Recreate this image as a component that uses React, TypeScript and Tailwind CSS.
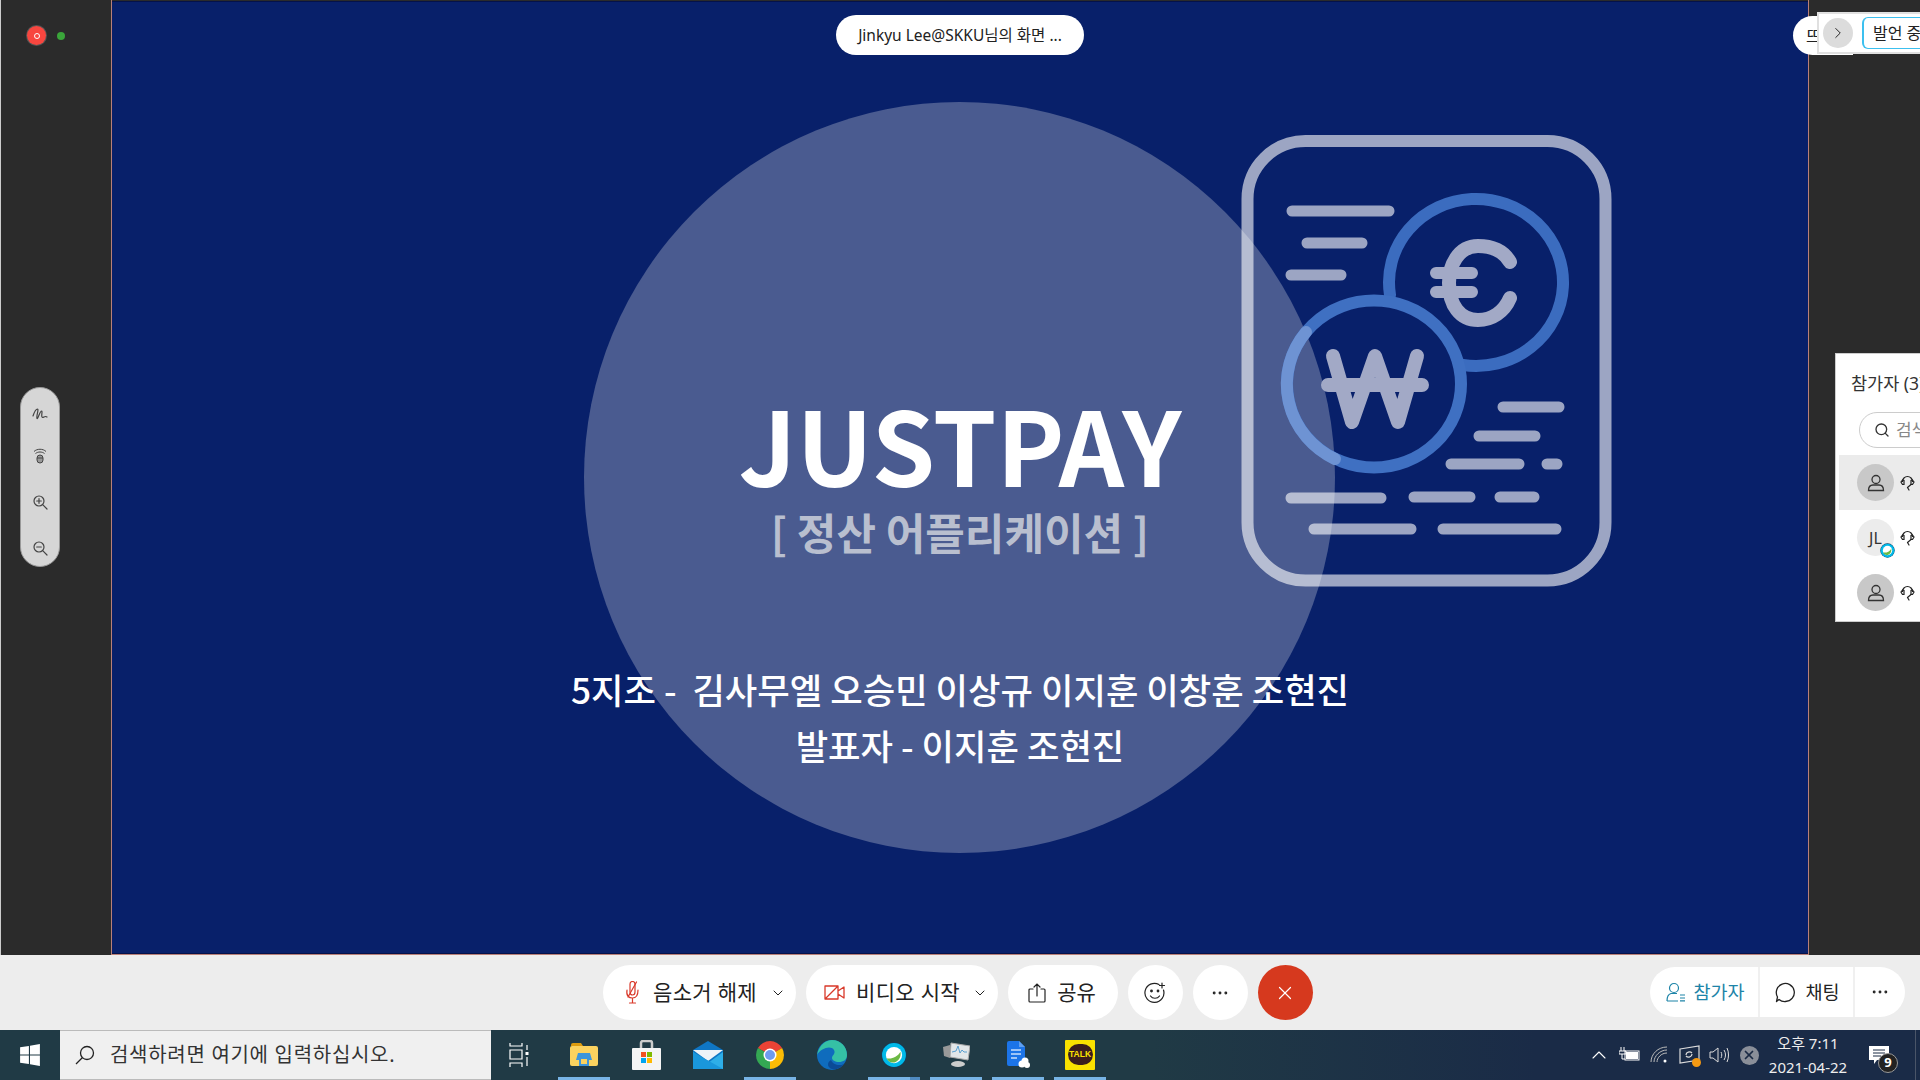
import { Search, ChevronRight, ChevronDown, ChevronUp, X, Ellipsis } from "lucide-react"

const FONT = { fontFamily: '"Noto Sans", "Noto Sans CJK KR", sans-serif' }
const CJK = { fontFamily: '"Noto Sans CJK KR", sans-serif' }

function Dot() {
  return (
    <div className="flex items-center gap-[11px] pl-[26px] pt-[26px]">
      <div className="flex h-[19px] w-[19px] items-center justify-center rounded-full bg-[#f8463f] ring-1 ring-[#555]">
        <div className="h-[6px] w-[6px] rounded-full border-[1.5px] border-white" />
      </div>
      <div className="h-[8px] w-[8px] rounded-full bg-[#3aa53a]" />
    </div>
  )
}

function ScribbleIcon() {
  return (
    <svg width="16" height="14" viewBox="0 0 16 14" fill="none" stroke="#444" strokeWidth="1.2" strokeLinecap="round">
      <path d="M1 9C2 6 4 2 5.500 2 7 2 4 10 5 11.500 6 12 8 4 9.500 4 11 4 8.500 10 10.500 10.500 12 10.500 13 8.500 15 10" />
    </svg>
  )
}

function RemoteIcon() {
  return (
    <svg width="14" height="16" viewBox="0 0 14 16" fill="none" stroke="#444" strokeWidth="1">
      <path d="M1 3.500c3-3 9-3 12 0M2.500 5.500c2.500-2 6.500-2 9 0" />
      <rect x="4" y="7" width="6" height="8" rx="3" fill="#999" />
      <path d="M4 10h6" />
    </svg>
  )
}

function ZoomIcon({ plus }: { plus?: boolean }) {
  return (
    <svg width="15" height="15" viewBox="0 0 15 15" fill="none" stroke="#444" strokeWidth="1.2" strokeLinecap="round">
      <circle cx="6" cy="6" r="5" />
      <path d="M9.700 9.700L14 14M3.700 6h4.600" />
      {plus && <path d="M6 3.700v4.600" />}
    </svg>
  )
}

function LeftRail() {
  return (
    <div className="flex w-[112px] shrink-0 flex-col border-x border-l-[#ccc] border-r-[#b98078] bg-[#2b2b2b]">
      <Dot />
      <div className="ml-[19px] mt-[342px] flex h-[180px] w-[40px] flex-col items-center gap-[27px] rounded-full border border-[#999] bg-[#d6d6d6] pt-[19px]">
        <ScribbleIcon />
        <div className="mb-[4px]">
          <RemoteIcon />
        </div>
        <ZoomIcon plus />
        <div className="mt-[4px]">
          <ZoomIcon />
        </div>
      </div>
    </div>
  )
}

function Slide() {
  return (
    <div className="relative flex h-[953px] w-[1696px] shrink-0 flex-col items-center overflow-hidden border-y border-[#04124a] bg-[#08206a] pt-[391px]">
      <div className="absolute left-[472px] top-[100px] h-[751px] w-[751px] rounded-full bg-[#4a5b90]" />
      <svg className="absolute left-[1108px] top-[118px]" width="410" height="480" viewBox="0 0 410 480" fill="none" strokeLinecap="round">
        <g stroke="#fff" strokeOpacity="0.6">
          <rect x="27.500" y="21" width="358" height="439.500" rx="58" strokeWidth="12" />
          <g strokeWidth="11">
            <path d="M72 91h97M87 123h55M71 155h50" />
            <path d="M283 287h56M259 316h56M231 344h68M327 344h10" />
            <path d="M71 378h90M194 377h56M280 377h34M94 409h97M223 409h113" />
          </g>
        </g>
        <g strokeWidth="12">
          <path d="M170 175A87 83.500 0 1 1 243 245" stroke="#3b6cbf" />
          <ellipse cx="154" cy="264" rx="87" ry="83.500" stroke="#3f70c2" />
          <path d="M86 212A87 83.500 0 0 0 115 339" stroke="#6e93d3" />
        </g>
        <g stroke="#a2a9c6" strokeWidth="14" strokeLinejoin="round">
          <path d="M290 142C282 128 268 126 258 126 238 126 229 146 229 163 229 185 240 200 258 200 272 200 284 192 290 178" />
          <path d="M216 153h36M216 172h36" strokeWidth="12" />
          <path d="M113 236l19 66 23-66 23 66 19-66M108 265h94" />
        </g>
      </svg>
      <div className="relative flex flex-col items-center text-white" style={CJK}>
        <div className="h-[100px] text-[102px] leading-[100px] font-semibold">JUSTPAY</div>
        <div className="mt-[10px] h-[56px] text-[43px] leading-[56px] font-semibold text-[#b9bfcf]">[ 정산 어플리케이션 ]</div>
        <div className="mt-[102px] text-[35.300px] leading-[56px] font-medium whitespace-pre">5지조 -  김사무엘 오승민 이상규 이지훈 이창훈 조현진</div>
        <div className="text-[35.300px] leading-[56px] font-medium">발표자 - 이지훈 조현진</div>
      </div>
    </div>
  )
}

function PersonIcon() {
  return (
    <svg width="20" height="20" viewBox="0 0 20 20" fill="none" stroke="#333" strokeWidth="1.300">
      <circle cx="10" cy="6.500" r="4" />
      <path d="M2.500 17.500c0-3.500 2-5.500 4.500-5.500h6c2.500 0 4.500 2 4.500 5.500z" />
    </svg>
  )
}

function HeadsetIcon() {
  return (
    <svg width="15" height="16" viewBox="0 0 15 16" fill="none" stroke="#222" strokeWidth="1.200" strokeLinecap="round">
      <path d="M2.500 6.500a5 5 0 0 1 10 0" />
      <path d="M2.500 5L1 7l1.500 2.500h1.500V5.500zM12.500 5L14 7l-1.500 2.500H11V5.500z" />
      <path d="M7.500 12.500l1.500 2.500M11 9.500l-3.500 3" />
    </svg>
  )
}

function CiscoBadge({ size }: { size: number }) {
  return (
    <svg width={size} height={size} viewBox="0 0 24 24">
      <circle cx="12" cy="12" r="11.500" fill="#0d3f66" />
      <circle cx="12" cy="12" r="11" fill="#00b9e8" />
      <path d="M17 2.500A11 11 0 0 1 13 23 11 11 0 0 0 17 2.500z" fill="#0b3a5e" />
      <circle cx="12" cy="12" r="7.500" fill="#fff" />
      <path d="M5 15c5 1 10-1 13-6 1 6-3 10-7 10-3 0-5-2-6-4z" fill="#6cb944" />
    </svg>
  )
}

function RightRail() {
  return <div className="flex-1 bg-[#2b2b2b]" />
}

function ParticipantRow({ active, jl }: { active?: boolean; jl?: boolean }) {
  return (
    <div className={`flex h-[55px] shrink-0 items-center gap-[6px] pl-[18px] ${active ? "bg-[#ebebeb]" : ""}`}>
      <div className={`relative flex h-[37px] w-[37px] shrink-0 items-center justify-center rounded-full ${jl ? "bg-[#ececec]" : "bg-[#c8c8c8]"}`}>
        {jl ? <span className="text-[16px] text-[#333]">JL</span> : <PersonIcon />}
        {jl && (
          <div className="absolute -bottom-[2px] -right-[1px]">
            <CiscoBadge size={15} />
          </div>
        )}
      </div>
      <HeadsetIcon />
    </div>
  )
}

function ParticipantsPanel() {
  return (
    <div className="absolute left-[1835px] top-[353px] flex h-[269px] w-[85px] flex-col overflow-hidden border-y border-l border-[#ccc] bg-white pl-[3px]" style={FONT}>
      <div className="h-[58px] shrink-0 whitespace-nowrap pl-[12px] pt-[17px] text-[17.500px] leading-[24px] text-[#333]">참가자 (3)</div>
      <div className="ml-[20px] flex h-[36px] w-[100px] shrink-0 items-center gap-[6px] rounded-full border border-[#ccc] pl-[14px] text-[17px] text-[#888]">
        <Search size={16} color="#333" className="shrink-0" />
        <span className="whitespace-nowrap">검색</span>
      </div>
      <div className="mt-[7px]">
        <ParticipantRow active />
        <ParticipantRow jl />
        <ParticipantRow />
      </div>
    </div>
  )
}

function Toolbar() {
  return (
    <div className="relative flex h-[75px] shrink-0 items-center justify-center gap-[10px] bg-[#ededed] pr-[5px] text-[21px] text-[#222]" style={FONT}>
      <div className="flex h-[55px] w-[193px] items-center justify-between rounded-full bg-white pl-[20px] pr-[10px]">
        <svg width="18" height="24" viewBox="0 0 18 24" fill="none" stroke="#d9392a" strokeWidth="1.200" strokeLinecap="round">
          <path d="M7 3a2.500 2.500 0 0 1 5 0v8c0 2-1 3-2.500 3S7 13 7 11z" />
          <path d="M4 9c-1 6 2 8 5.500 8S15 15 15 9M9.500 17v5M6.500 22h6M13.500 1L5 16" />
        </svg>
        <span className="tracking-[0.3px]">음소거 해제</span>
        <ChevronDown size={16} strokeWidth={1.500} />
      </div>
      <div className="flex h-[55px] w-[192px] items-center justify-between rounded-full bg-white pl-[18px] pr-[10px]">
        <svg width="21" height="17" viewBox="0 0 21 17" fill="none" stroke="#d9392a" strokeWidth="1.300" strokeLinejoin="round">
          <path d="M1 2h13v13H1zM14 7l6-4v11l-6-4M1 15L14 2" />
        </svg>
        <span className="tracking-[0.3px]">비디오 시작</span>
        <ChevronDown size={16} strokeWidth={1.500} />
      </div>
      <div className="flex h-[55px] w-[110px] items-center justify-center gap-[10px] rounded-full bg-white pr-[2px]">
        <svg width="20" height="20" viewBox="0 0 20 20" fill="none" stroke="#222" strokeWidth="1.200" strokeLinecap="round">
          <path d="M6 6H3a1 1 0 0 0-1 1v11a1 1 0 0 0 1 1h14a1 1 0 0 0 1-1V7a1 1 0 0 0-1-1h-3M10 13V1M7 4l3-3 3 3" />
        </svg>
        <span>공유</span>
      </div>
      <div className="flex h-[55px] w-[55px] items-center justify-center rounded-full bg-white">
        <svg width="22" height="22" viewBox="0 0 22 22" fill="none" stroke="#222" strokeWidth="1.200" strokeLinecap="round">
          <path d="M15 2.500A9.500 9.500 0 1 0 19.500 8M6.500 14c2 3 7 3 9 0M18 1v5M15.500 3.500h5" />
          <circle cx="7.500" cy="9" r="0.800" fill="#222" />
          <circle cx="14" cy="9" r="0.800" fill="#222" />
        </svg>
      </div>
      <div className="flex h-[55px] w-[55px] items-center justify-center rounded-full bg-white">
        <Ellipsis size={20} strokeWidth={1.500} />
      </div>
      <div className="flex h-[55px] w-[55px] items-center justify-center rounded-full bg-[#d6391e]">
        <X size={22} color="white" strokeWidth={1.300} />
      </div>
      <div className="absolute left-[1650px] top-[12px] flex h-[50px] items-stretch rounded-full bg-white text-[18.500px]">
        <div className="flex w-[110px] items-center justify-center gap-[7px] border-r-2 border-[#f0f0f0] pl-[3px] text-[#1d84a8]">
          <svg width="20" height="20" viewBox="0 0 20 20" fill="none" stroke="#1d84a8" strokeWidth="1.200">
            <circle cx="8" cy="6" r="4.500" />
            <path d="M1 19c0-5 2-7 4-7.500h6M1 19h11M14 13h5M14 16h5M14 18.800h5" />
          </svg>
          참가자
        </div>
        <div className="flex w-[95px] items-center justify-center gap-[9px] border-r-2 border-[#f0f0f0] pl-[2px]">
          <svg width="21" height="21" viewBox="0 0 21 21" fill="none" stroke="#222" strokeWidth="1.300" strokeLinejoin="round">
            <path d="M4 17.500l-2.500 2 1-4.500A9 9 0 1 1 10.500 19.500 9 9 0 0 1 4 17.500z" />
          </svg>
          채팅
        </div>
        <div className="flex w-[50px] items-center justify-center">
          <Ellipsis size={20} strokeWidth={1.500} />
        </div>
      </div>
    </div>
  )
}

function WindowsLogo() {
  return (
    <svg width="20" height="22" viewBox="0 0 18 20" fill="#fff">
      <path d="M0 3l8-1.200v7.700H0zM9 1.700L18 0v9.500H9zM0 10.500h8v7.700L0 17zM9 10.500h9V20l-9-1.700z" />
    </svg>
  )
}

function TaskIcon({ running, children, split }: { running?: boolean; split?: boolean; children: React.ReactNode }) {
  return (
    <div className="relative flex h-full w-[62px] shrink-0 items-center justify-center pb-[1px]">
      {children}
      {running && <div className={`absolute bottom-0 left-[5px] h-[3px] w-[52px] bg-[#78b4e6] ${split ? "border-r-[10px] border-[#4f8ac0]" : ""}`} />}
    </div>
  )
}

function TaskbarApps() {
  return (
    <div className="flex h-full items-center">
      <div className="flex h-full w-[62px] items-center justify-center pr-[6px]">
        <svg width="20" height="24" viewBox="0 0 20 24" fill="none" stroke="#fff" strokeWidth="1.200">
          <path d="M1 0v3h12V0M1 7h12v9H1zM1 24v-4h12v4" />
          <path d="M18 2v5M18 14v9" />
          <rect x="16.500" y="9" width="3" height="3" fill="#fff" stroke="none" />
        </svg>
      </div>
      <TaskIcon running>
        <svg width="28" height="23" viewBox="0 0 28 23">
          <path d="M1 2a2 2 0 0 1 2-2h8l2 3h-12z" fill="#dc9b0f" />
          <rect x="0" y="3" width="28" height="20" rx="2" fill="#fbd25f" />
          <path d="M8 10h12l2 7h-3v6H9v-6H6z" fill="#3c95dc" />
          <rect x="11" y="16" width="6" height="5" fill="#fbd25f" />
        </svg>
      </TaskIcon>
      <TaskIcon>
        <svg width="29" height="30" viewBox="0 0 29 30">
          <path d="M9 8V3a2 2 0 0 1 2-2h7a2 2 0 0 1 2 2v5" fill="none" stroke="#ccc" strokeWidth="2.500" />
          <rect x="0" y="8" width="29" height="22" rx="1" fill="#f4f4f4" />
          <rect x="9" y="12" width="5" height="5" fill="#f25022" />
          <rect x="15" y="12" width="5" height="5" fill="#7fba00" />
          <rect x="9" y="18" width="5" height="5" fill="#00a4ef" />
          <rect x="15" y="18" width="5" height="5" fill="#ffb900" />
        </svg>
      </TaskIcon>
      <TaskIcon>
        <svg width="30" height="28" viewBox="0 0 30 28">
          <path d="M0 9L15 0l15 9v19H0z" fill="#0f76c4" />
          <path d="M0 9h30L15 20z" fill="#eef3f8" />
          <path d="M0 11l15 11 15-11v17H0z" fill="#2eaee8" />
          <path d="M0 11l30 17H0z" fill="#1a97dc" />
        </svg>
      </TaskIcon>
      <TaskIcon running>
        <svg width="28" height="28" viewBox="0 0 28 28">
          <path d="M14 14L1.900 7A14 14 0 0 1 26.100 7z" fill="#ea4335" />
          <path d="M14 14L26.100 7A14 14 0 0 1 14 28z" fill="#fbbc05" />
          <path d="M14 14L14 28A14 14 0 0 1 1.900 7z" fill="#34a853" />
          <circle cx="14" cy="14" r="6.500" fill="#fff" />
          <circle cx="14" cy="14" r="5" fill="#6f9bf0" />
        </svg>
      </TaskIcon>
      <TaskIcon>
        <svg width="30" height="30" viewBox="0 0 30 30">
          <circle cx="15" cy="15" r="15" fill="#0f6cbd" />
          <path d="M0 15C2 5 9 0 15 0c9 0 15 7 15 15 0 5-4 7-8 7-4 0-7-2-7-4 0-3 4-4 2-8C14 5 4 8 0 15z" fill="#35c1a5" />
          <path d="M14 20c1 3 5 5 8 5 2 0 3 0 5-1-3 4-8 6-12 5-4-1-6-6-1-9z" fill="#0b4b96" />
        </svg>
      </TaskIcon>
      <TaskIcon running split>
        <CiscoBadge size={26} />
      </TaskIcon>
      <TaskIcon running>
        <svg width="27" height="25" viewBox="0 0 27 25">
          <path d="M8 1l19 3-2 14-18-3z" fill="#e2e6e8" stroke="#aaa" />
          <path d="M9 10l4-1 2-5 2 7 2-3 2 2 3 0" fill="none" stroke="#5aa0d0" strokeWidth="1" />
          <path d="M0 5l7-2v13l-6-2z" fill="#999" />
          <ellipse cx="15" cy="22" rx="7" ry="3" fill="#ccc" />
        </svg>
      </TaskIcon>
      <TaskIcon running>
        <svg width="23" height="27" viewBox="0 0 23 27">
          <path d="M2 0h10l6 6v19H2a2 2 0 0 1-2-2V2a2 2 0 0 1 2-2z" fill="#1c74e8" />
          <path d="M12 0l6 6h-6z" fill="#5f9ff0" />
          <path d="M4 9h10M4 13h10M4 17h6" stroke="#c9defa" strokeWidth="1.500" />
          <circle cx="15" cy="23" r="3.500" fill="#fff" />
          <circle cx="20" cy="24" r="3" fill="#fff" />
          <circle cx="18" cy="20" r="3.500" fill="#fff" />
        </svg>
      </TaskIcon>
      <TaskIcon running>
        <div className="flex h-[30px] w-[30px] items-center justify-center rounded-[1px] bg-[#fae100]">
          <div className="flex h-[21px] w-[25px] items-center justify-center rounded-full bg-[#3a1d1d] text-[8.500px] font-bold text-[#fae100]" style={{ fontFamily: '"Liberation Sans", sans-serif' }}>
            TALK
          </div>
        </div>
      </TaskIcon>
    </div>
  )
}

function TrayCell({ children }: { children: React.ReactNode }) {
  return <div className="flex h-full w-[30px] items-center justify-center">{children}</div>
}

function SystemTray() {
  return (
    <div className="ml-auto flex h-full items-center text-white">
      <TrayCell>
        <ChevronUp size={24} strokeWidth={1.100} />
      </TrayCell>
      <TrayCell>
        <svg width="21" height="16" viewBox="0 0 21 16" fill="#fff">
          <path d="M2 0v4M5 0v4M0 4h7v3H0zM3 7v5h3" stroke="#fff" fill="none" />
          <rect x="6" y="4" width="14" height="9" fill="none" stroke="#fff" />
          <rect x="7" y="5" width="12" height="7" fill="#fff" />
        </svg>
      </TrayCell>
      <TrayCell>
        <svg width="18" height="18" viewBox="0 0 18 18" fill="none" stroke="#bbb" strokeWidth="1">
          <path d="M1 16C1 8 8 1 17 1M4 16c0-6 6-12 13-12M7 16c0-4 4-9 10-9" />
          <circle cx="15" cy="15" r="1.500" fill="#fff" stroke="none" />
        </svg>
      </TrayCell>
      <TrayCell>
        <div className="relative">
          <svg width="21" height="20" viewBox="0 0 21 20" fill="none" stroke="#ddd" strokeWidth="1.200">
            <path d="M1 4l19-3v14l-19 3z" />
            <path d="M7 10c0-3 4-4 6-2M13 9c0 3-4 4-6 2" />
          </svg>
          <div className="absolute -bottom-[2px] -right-[1px] h-[9px] w-[9px] rounded-full bg-[#f59a13]" />
        </div>
      </TrayCell>
      <TrayCell>
        <svg width="20" height="16" viewBox="0 0 20 16" fill="none" stroke="#ddd" strokeWidth="1">
          <path d="M1 5h3l5-4v14l-5-4H1zM12 5c1 2 1 4 0 6M15 3c2 3 2 7 0 10M18 1c2 4 2 10 0 14" />
        </svg>
      </TrayCell>
      <TrayCell>
        <div className="flex h-[19px] w-[19px] items-center justify-center rounded-full bg-[#8a8f99]">
          <X size={14} color="#1a2a44" strokeWidth={3} />
        </div>
      </TrayCell>
      <div className="flex w-[88px] flex-col items-center text-[15px] leading-[24px] text-[#eee]">
        <span>오후 7:11</span>
        <span className="whitespace-nowrap">2021-04-22</span>
      </div>
      <div className="flex h-full w-[54px] items-center justify-center">
        <div className="relative">
          <svg width="20" height="18" viewBox="0 0 20 18" fill="#fff">
            <path d="M0 0h20v14H8l-3 4v-4H0z" />
            <path d="M4 4h12M4 7h12M4 10h8" stroke="#1a2a44" />
          </svg>
          <div className="absolute -bottom-[9px] -right-[9px] flex h-[20px] w-[20px] items-center justify-center rounded-full border border-[#999] bg-[#222] text-[13px] font-bold text-white">9</div>
        </div>
      </div>
      <div className="h-full w-[14px] pl-[9px]">
        <div className="h-full w-px bg-[#4a5568]" />
      </div>
    </div>
  )
}

function Taskbar() {
  return (
    <div className="flex h-[50px] shrink-0 items-stretch bg-[linear-gradient(90deg,#203a45_0%,#203a45_60%,#1a2b47_80%,#1a2b47_100%)]" style={FONT}>
      <div className="flex w-[60px] items-center justify-center">
        <WindowsLogo />
      </div>
      <div className="flex w-[431px] items-center gap-[15px] border-y border-[#bbb] bg-[#f0f0f0] pl-[15px] text-[20px] text-[#333]">
        <svg width="20" height="20" viewBox="0 0 20 20" fill="none" stroke="#222" strokeWidth="1.300">
          <circle cx="12" cy="8" r="6.500" />
          <path d="M7.500 12.500L1 19" />
        </svg>
        <span className="whitespace-nowrap tracking-[0.7px]">검색하려면 여기에 입력하십시오.</span>
      </div>
      <TaskbarApps />
      <SystemTray />
    </div>
  )
}

export default function App() {
  return (
    <div className="relative flex h-[1080px] w-[1920px] flex-col overflow-hidden bg-[#2b2b2b]">
      <div className="flex h-[955px] shrink-0">
        <LeftRail />
        <div className="flex flex-col">
          <div className="h-[1px] bg-[#2b2b2b]" />
          <Slide />
          <div className="h-[1px] bg-[#b98078]" />
        </div>
        <div className="w-px bg-[#b98078]" />
        <RightRail />
      </div>
      <Toolbar />
      <Taskbar />

      <div className="absolute left-[836px] top-[15px] flex h-[40px] w-[248px] items-center justify-center rounded-full bg-white pt-[2px] text-[15.500px] text-[#222]" style={FONT}>
        Jinkyu Lee@SKKU님의 화면 ...
      </div>

      <div className="absolute left-[1793px] top-[16px] flex h-[39px] w-[60px] items-center rounded-l-full bg-white pl-[13px] text-[16px] text-[#222]" style={FONT}>
        뜨
      </div>
      <div className="absolute left-[1817px] top-[12px] flex h-[42px] w-[103px] items-center gap-[9px] border-b-2 border-l-2 border-t-2 border-[#e0e0e0] bg-white pl-[4px]" style={FONT}>
        <div className="flex h-[30px] w-[30px] shrink-0 items-center justify-center rounded-full bg-[#dcdcdc]">
          <ChevronRight size={18} strokeWidth={1.300} color="#222" />
        </div>
        <div className="flex h-[32px] w-[70px] shrink-0 items-center overflow-hidden whitespace-nowrap rounded-l-[6px] border-y border-l-2 border-[#3cc0ef] pl-[9px] text-[16px] text-[#222]">
          발언 중
        </div>
      </div>

      <ParticipantsPanel />
    </div>
  )
}
